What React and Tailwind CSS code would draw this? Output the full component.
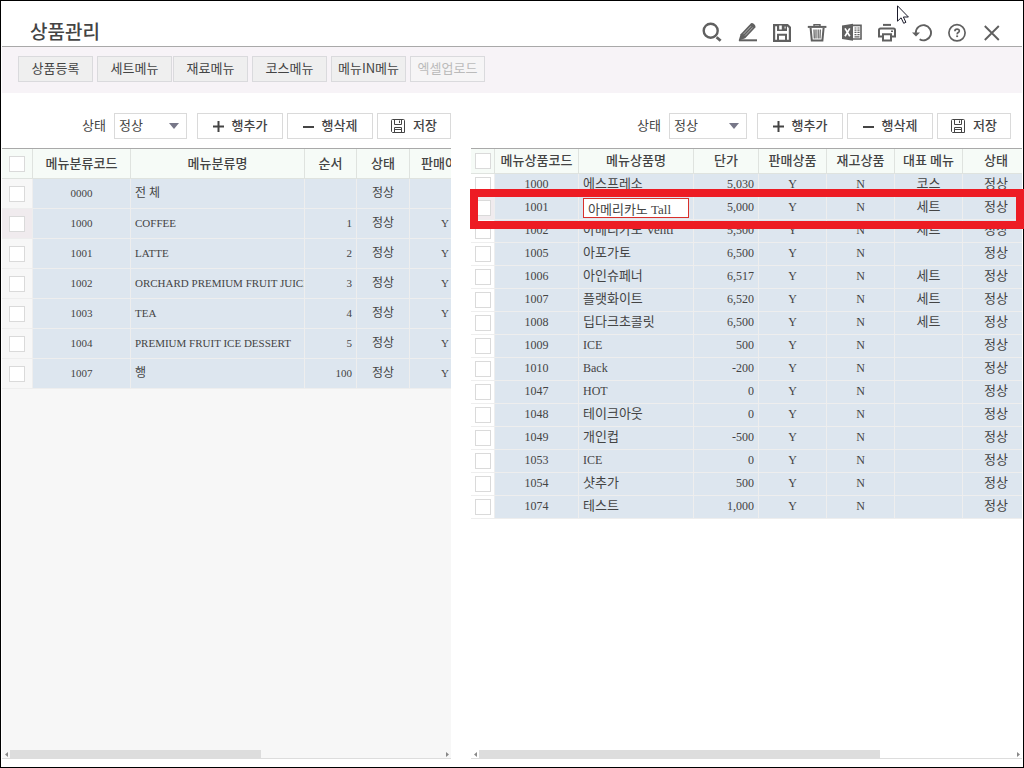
import React, { useState } from 'react';
import clsx from 'clsx';

const HANGUL = /[\u3131-\uD79D]/;

const CATEGORY_COLUMNS = [
  { key: 'code', label: '메뉴분류코드', width: 'w-[98px]', align: 'text-center' },
  { key: 'name', label: '메뉴분류명', width: 'w-[174px]', align: 'text-left' },
  { key: 'order', label: '순서', width: 'w-[52px]', align: 'text-right' },
  { key: 'status', label: '상태', width: 'w-[53px]', align: 'text-center' },
  { key: 'sale', label: '판매여부', width: 'w-[71px]', align: 'text-center' },
];

const CATEGORIES = [
  { code: '0000', name: '전 체', order: '', status: '정상', sale: '' },
  { code: '1000', name: 'COFFEE', order: '1', status: '정상', sale: 'Y' },
  { code: '1001', name: 'LATTE', order: '2', status: '정상', sale: 'Y' },
  { code: '1002', name: 'ORCHARD PREMIUM FRUIT JUICE', order: '3', status: '정상', sale: 'Y' },
  { code: '1003', name: 'TEA', order: '4', status: '정상', sale: 'Y' },
  { code: '1004', name: 'PREMIUM FRUIT ICE DESSERT', order: '5', status: '정상', sale: 'Y' },
  { code: '1007', name: '행', order: '100', status: '정상', sale: 'Y' },
];

const PRODUCT_COLUMNS = [
  { key: 'code', label: '메뉴상품코드', width: 'w-[84px]', align: 'text-center' },
  { key: 'name', label: '메뉴상품명', width: 'w-[115px]', align: 'text-left' },
  { key: 'price', label: '단가', width: 'w-[65px]', align: 'text-right' },
  { key: 'sale', label: '판매상품', width: 'w-[68px]', align: 'text-center' },
  { key: 'stock', label: '재고상품', width: 'w-[68px]', align: 'text-center' },
  { key: 'type', label: '대표 메뉴', width: 'w-[68px]', align: 'text-center' },
  { key: 'status', label: '상태', width: 'w-[67px]', align: 'text-center' },
];

const PRODUCTS = [
  ['1000', '에스프레소', '5,030', '코스'],
  ['1001', '아메리카노 Tall', '5,000', '세트'],
  ['1002', '아메리카노 Venti', '5,500', '세트'],
  ['1005', '아포가토', '6,500', ''],
  ['1006', '아인슈페너', '6,517', '세트'],
  ['1007', '플랫화이트', '6,520', '세트'],
  ['1008', '딥다크초콜릿', '6,500', '세트'],
  ['1009', 'ICE', '500', ''],
  ['1010', 'Back', '-200', ''],
  ['1047', 'HOT', '0', ''],
  ['1048', '테이크아웃', '0', ''],
  ['1049', '개인컵', '-500', ''],
  ['1053', 'ICE', '0', ''],
  ['1054', '샷추가', '500', ''],
  ['1074', '테스트', '1,000', ''],
].map(([code, name, price, type]) => ({ code, name, price, sale: 'Y', stock: 'N', type, status: '정상' }));

const ICONS = [
  {
    label: '조회',
    art: (
      <>
        <circle cx="8.7" cy="8.7" r="7" fill="none" stroke="currentColor" strokeWidth="2.4" />
        <path d="M14.6 15.2l4 3.6" stroke="currentColor" strokeWidth="2.8" fill="none" />
      </>
    ),
  },
  {
    label: '수정',
    art: (
      <>
        <path d="M1.6 18.8l2-6.6L14 1.2q1.4-.6 3 .9t1.600 3.100L8.200 16.200z" fill="currentColor" />
        <path d="M6.400 12.200l7.600-8M8 13.600l7.800-8.200" stroke="#fff" strokeWidth=".5" fill="none" />
        <path d="M2 18.300h18" stroke="currentColor" strokeWidth="2" fill="none" />
      </>
    ),
  },
  {
    label: '저장',
    art: (
      <>
        <path d="M2.1 3.1h13.4l2.4 2.4v13.4H2.1z" fill="none" stroke="currentColor" strokeWidth="2.2" />
        <path d="M5 3h10v6H5z" fill="currentColor" />
        <path d="M7.2 3.6h2.6v3.8H7.2zM12.6 4.4h1v2h-1z" fill="#fff" />
        <path d="M6 18.4v-5.6h8v5.6" fill="none" stroke="currentColor" strokeWidth="2" />
      </>
    ),
  },
  {
    label: '삭제',
    art: (
      <>
        <path d="M7 4V2.8h6V4" fill="none" stroke="currentColor" strokeWidth="1.4" />
        <path d="M.8 4.9h18.6" stroke="currentColor" strokeWidth="2" />
        <path d="M3.6 6l1.2 12.4h10.6L16.6 6" fill="none" stroke="currentColor" strokeWidth="2" />
        <path d="M7 7.6l.3 9M9 7.6v9M11.2 7.6v9M13.3 7.6l-.3 9" stroke="currentColor" strokeWidth="1.2" />
      </>
    ),
  },
  {
    label: '엑셀',
    art: (
      <>
        <path d="M0 3.6L11 1.8v17L0 17z" fill="currentColor" />
        <path d="M11 3.4h8v13.6h-8" fill="none" stroke="currentColor" strokeWidth="1.6" />
        <path d="M12.5 6h2M12.5 8.2h2M12.5 10.4h2M12.5 12.6h2M15.4 6h2.2M15.4 8.2h2.2M15.4 10.4h2.2M15.4 12.6h2.2M12.5 14.8h5" stroke="currentColor" strokeWidth="1.2" />
        <path d="M3 6.4l4.8 7.8M7.8 6.4L3 14.2" stroke="#fff" strokeWidth="1.7" />
      </>
    ),
  },
  {
    label: '인쇄',
    art: (
      <>
        <path d="M6 2.9h8" stroke="currentColor" strokeWidth="2" />
        <path d="M6 14.5H2V8q0-1.5 1.5-1.5h13Q18 6.5 18 8v6.5h-4" fill="none" stroke="currentColor" strokeWidth="2" />
        <path d="M6 12.2h8v6.4H6z" fill="none" stroke="currentColor" strokeWidth="2" />
        <path d="M14 8.4h2V10h-2z" fill="currentColor" />
      </>
    ),
  },
  {
    label: '초기화',
    art: (
      <>
        <path d="M3.8 12v-1.3a7.6 7.6 0 1 1 3.8 6.6" fill="none" stroke="currentColor" strokeWidth="1.9" />
        <path d="M0 10.4h8L4 14.6z" fill="currentColor" />
      </>
    ),
  },
  {
    label: '도움말',
    art: (
      <>
        <circle cx="10" cy="10.8" r="8.1" fill="none" stroke="currentColor" strokeWidth="1.7" />
        <path d="M7.9 9.2q0-2 2.2-2t2.2 1.8q0 1-1.1 1.6t-1 1.7" fill="none" stroke="currentColor" strokeWidth="1.7" />
        <path d="M9.2 13.4h1.9v1.7H9.2z" fill="currentColor" />
      </>
    ),
  },
  {
    label: '닫기',
    art: <path d="M2.8 4l14 14M16.800 4l-14 14" stroke="currentColor" strokeWidth="1.9" fill="none" />,
  },
];

const PlusIcon = () => (
  <svg viewBox="0 0 11 11" className="w-[11px] h-[11px]" aria-hidden="true">
    <path d="M0 5.5h11M5.5 0v11" stroke="currentColor" strokeWidth="2" />
  </svg>
);

const MinusIcon = () => (
  <svg viewBox="0 0 11 11" className="w-[11px] h-[11px]" aria-hidden="true">
    <path d="M0 6h11" stroke="currentColor" strokeWidth="2" />
  </svg>
);

const DiskIcon = () => (
  <svg viewBox="0 0 14 14" className="w-[14px] h-[14px]" fill="none" stroke="currentColor" aria-hidden="true">
    <path d="M.5 1.5q0-1 1-1h11q1 0 1 1v12h-12l-1-1zM3.5.5v5h7v-5M8.5 1.5V4M3.500 13V8.500h7V13M4 10.500h6" />
  </svg>
);

function TabButton({ children, disabled }) {
  return (
    <button
      type="button"
      disabled={disabled}
      className={clsx(
        'w-[75px] h-[26px] border border-[#dadadd] pb-0.5 text-[13px] leading-4 whitespace-nowrap',
        disabled ? 'bg-[#f6f5f6] text-[#bbbbbb]' : 'bg-[#efefef] text-[#444444]'
      )}
    >
      {children}
    </button>
  );
}

function ActionButton({ icon: Icon, children, width }) {
  return (
    <button
      type="button"
      className={clsx(
        'h-[26px] flex items-center justify-center gap-2 border border-[#dadada] bg-white text-[13px] leading-4 font-medium whitespace-nowrap',
        width
      )}
    >
      <Icon />
      <span className="pb-0.5">{children}</span>
    </button>
  );
}

function Controls({ id, selectWidth, className }) {
  return (
    <div className={clsx('flex items-center justify-end pt-5 pb-[9px] text-[#444444]', className)}>
      <label htmlFor={id} className="mr-2 pb-0.5 text-[13px] leading-4">상태</label>
      <div className={clsx('relative mr-2.5', selectWidth)}>
        <select
          id={id}
          defaultValue="정상"
          className="block w-full h-[26px] appearance-none border border-[#dadada] bg-white pl-1 pb-0.5 text-[13px] leading-4"
        >
          <option>정상</option>
          <option>중지</option>
        </select>
        <svg viewBox="0 0 10 6" className="absolute right-2 top-2.5 w-2.5 h-1.5 pointer-events-none" aria-hidden="true">
          <path d="M0 0h10L5 6z" fill="#777788" />
        </svg>
      </div>
      <div className="flex gap-1">
        <ActionButton icon={PlusIcon} width="w-[86px]">행추가</ActionButton>
        <ActionButton icon={MinusIcon} width="w-[86px]">행삭제</ActionButton>
        <ActionButton icon={DiskIcon} width="w-[74px]">저장</ActionButton>
      </div>
    </div>
  );
}

const CheckBox = ({ label }) => (
  <input
    type="checkbox"
    aria-label={label}
    className="block mx-auto w-4 h-4 appearance-none border border-[#dadada] bg-white checked:bg-[#777788]"
  />
);

function DataTable({ columns, rows, activeCode, compact, renderName, width }) {
  return (
    <table className={clsx('table-fixed border-separate border-spacing-0 text-[#444444]', width)}>
      <thead>
        <tr className={compact ? 'h-[25px]' : 'h-[30px]'}>
          <th className={clsx('p-0 border-r border-b border-[#dfe3df] bg-[#f6fbf7]', compact ? 'w-6' : 'w-[31px]')}>
            <CheckBox label="전체 선택" />
          </th>
          {columns.map((col) => (
            <th
              key={col.key}
              className={clsx(
                'p-0 pb-0.5 border-r border-b border-[#dfe3df] bg-[#f6fbf7] text-[13px] leading-4 font-medium whitespace-nowrap',
                col.width
              )}
            >
              {col.label}
            </th>
          ))}
        </tr>
      </thead>
      <tbody>
        {rows.map((row) => (
          <tr key={row.code} className={compact ? 'h-[23px]' : 'h-[30px]'}>
            <td
              className={clsx(
                'p-0 border-r border-b border-[#eeeeee]',
                row.code === activeCode ? 'bg-[#f0ebee]' : compact ? 'bg-white' : 'bg-[#f7f7f7]'
              )}
            >
              <CheckBox label={`${row.code} 선택`} />
            </td>
            {columns.map((col) => (
              <td
                key={col.key}
                className={clsx(
                  "px-1 pt-0 border-r border-b border-[#eeeeee] bg-[#dde6ef] font-['Liberation_Serif','Noto_Sans_CJK_KR',serif] leading-4 whitespace-nowrap overflow-hidden",
                  col.align,
                  // the 23px rows leave 2px round the name editor
                  col.key === 'name' && renderName && row.code === activeCode ? 'pb-0' : 'pb-0.5',
                  compact
                    ? HANGUL.test(row[col.key]) ? 'text-[13px]' : 'text-[12px]'
                    : HANGUL.test(row[col.key]) ? 'text-[12px]' : 'text-[11px]'
                )}
              >
                {col.key === 'name' && renderName ? renderName(row) : row[col.key]}
              </td>
            ))}
          </tr>
        ))}
      </tbody>
    </table>
  );
}

function ScrollStrip({ thumb }) {
  return (
    <div className="flex items-center h-[9px] border-b border-[#dddddd]" aria-hidden="true">
      <svg viewBox="0 0 8 8" className="w-2 h-2 shrink-0">
        <path d="M6 2v5L3 4.5z" fill="#888888" />
      </svg>
      <div className="flex-1 h-2">
        <div className={clsx('h-full bg-[#dddddd]', thumb)} />
      </div>
      <svg viewBox="0 0 8 8" className="w-2 h-2 shrink-0">
        <path d="M3 2v5l3-2.5z" fill="#888888" />
      </svg>
    </div>
  );
}

export default function App() {
  const [editingName, setEditingName] = useState('아메리카노 Tall');

  const renderProductName = (row) =>
    row.code === '1001' ? (
      <input
        type="text"
        aria-label="메뉴상품명"
        value={editingName}
        onChange={(e) => setEditingName(e.target.value)}
        className="block w-full h-5 px-1 border border-[#d9302c] bg-white outline-none"
      />
    ) : (
      row.name
    );

  return (
    <div className="relative min-h-screen flex flex-col border border-black bg-white px-px pb-2 font-['Noto_Sans_CJK_KR',sans-serif]">
      <header className="h-[46px] flex items-end justify-between border-b border-[#a9a9a9] pl-7 pr-5">
        <h1 className="pb-[3px] text-[19px] leading-6 font-medium text-[#444444]">상품관리</h1>
        <div className="flex gap-[15px] pb-1 text-[#606060]">
          {ICONS.map((icon) => (
            <button key={icon.label} type="button" aria-label={icon.label} className="w-5 h-5">
              <svg viewBox="0 0 20 20" className="w-5 h-5">{icon.art}</svg>
            </button>
          ))}
        </div>
      </header>

      <nav className="h-[46px] flex gap-1 bg-[#f7f3f7] pt-[9px] px-4">
        <TabButton>상품등록</TabButton>
        <div className="flex gap-px">
          <TabButton>세트메뉴</TabButton>
          <TabButton>재료메뉴</TabButton>
        </div>
        <TabButton>코스메뉴</TabButton>
        <TabButton>메뉴IN메뉴</TabButton>
        <TabButton disabled>엑셀업로드</TabButton>
      </nav>

      <main className="flex-1 grid grid-cols-[449fr_551fr] gap-x-5">
        <section className="min-w-0 flex flex-col">
          <Controls id="category-status" selectWidth="w-[73px]" />
          <div className="flex-1 overflow-hidden border-t border-[#a9a9a9] bg-[#f7f7f7]">
            <DataTable columns={CATEGORY_COLUMNS} rows={CATEGORIES} activeCode="1000" width="w-[479px]" />
          </div>
          <div className="bg-[#f7f7f7]">
            <ScrollStrip thumb="w-[58%]" />
          </div>
        </section>

        <section className="min-w-0 flex flex-col">
          <Controls id="product-status" selectWidth="w-[78px]" className="pr-[11px]" />
          <div className="relative flex-1 flex flex-col">
            <div className="flex-1 overflow-hidden border-t border-[#a9a9a9]">
              <DataTable
                columns={PRODUCT_COLUMNS}
                rows={PRODUCTS}
                activeCode="1001"
                compact
                renderName={renderProductName}
                width="w-[559px]"
              />
            </div>
            {/* highlight around the row being edited */}
            <div className="absolute -left-px -right-0.5 top-[41px] h-10 border-8 border-[#ed1c24] pointer-events-none" />
          </div>
          <ScrollStrip thumb="w-[75%]" />
        </section>
      </main>

      <svg viewBox="0 0 12 19" className="absolute right-[114px] top-1 w-3 h-[19px] pointer-events-none" aria-hidden="true">
        <path d="M.5.8v15.400l3.600-3.400 2.600 5.500 2.200-1-2.500-5.300h5z" fill="#fff" stroke="#1a1a2a" strokeWidth="1" />
      </svg>
    </div>
  );
}
